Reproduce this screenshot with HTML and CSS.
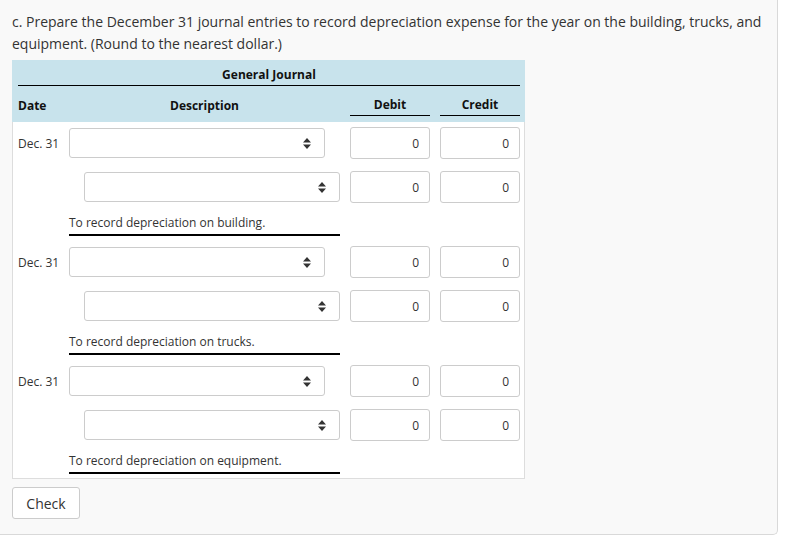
FILE: index.html
```html
<!DOCTYPE html>
<html>
<head>
<meta charset="utf-8">
<link rel="stylesheet" href="styles.css">
</head>
<body>
<div class="panel">
  <p class="prompt">c. Prepare the December 31 journal entries to record depreciation expense for the year on the building, trucks, and equipment. (Round to the nearest dollar.)</p>
  <div class="journal">
    <div class="jhead">
      <div class="jtitle">General Journal</div>
      <div class="jcols">
        <div class="h-date">Date</div>
        <div class="h-desc">Description</div>
        <div class="h-amt">Debit</div>
        <div class="h-amt">Credit</div>
      </div>
    </div>
    <div class="jbody">
      <div class="entry">
        <div class="line">
          <div class="date">Dec. 31</div>
          <div class="desc"><div class="sel"><svg class="arrows" width="8" height="11" viewBox="0 0 8 11"><path d="M4 0L8 4.5H0Z M4 11L0 6.5H8Z" fill="#333"/></svg></div></div>
          <input class="amt" value="0">
          <input class="amt" value="0">
        </div>
        <div class="line">
          <div class="date"></div>
          <div class="desc credit-side"><div class="sel"><svg class="arrows" width="8" height="11" viewBox="0 0 8 11"><path d="M4 0L8 4.5H0Z M4 11L0 6.5H8Z" fill="#333"/></svg></div></div>
          <input class="amt" value="0">
          <input class="amt" value="0">
        </div>
        <div class="memo">To record depreciation on building.</div>
      </div>
      <div class="entry">
        <div class="line">
          <div class="date">Dec. 31</div>
          <div class="desc"><div class="sel"><svg class="arrows" width="8" height="11" viewBox="0 0 8 11"><path d="M4 0L8 4.5H0Z M4 11L0 6.5H8Z" fill="#333"/></svg></div></div>
          <input class="amt" value="0">
          <input class="amt" value="0">
        </div>
        <div class="line">
          <div class="date"></div>
          <div class="desc credit-side"><div class="sel"><svg class="arrows" width="8" height="11" viewBox="0 0 8 11"><path d="M4 0L8 4.5H0Z M4 11L0 6.5H8Z" fill="#333"/></svg></div></div>
          <input class="amt" value="0">
          <input class="amt" value="0">
        </div>
        <div class="memo">To record depreciation on trucks.</div>
      </div>
      <div class="entry">
        <div class="line">
          <div class="date">Dec. 31</div>
          <div class="desc"><div class="sel"><svg class="arrows" width="8" height="11" viewBox="0 0 8 11"><path d="M4 0L8 4.5H0Z M4 11L0 6.5H8Z" fill="#333"/></svg></div></div>
          <input class="amt" value="0">
          <input class="amt" value="0">
        </div>
        <div class="line">
          <div class="date"></div>
          <div class="desc credit-side"><div class="sel"><svg class="arrows" width="8" height="11" viewBox="0 0 8 11"><path d="M4 0L8 4.5H0Z M4 11L0 6.5H8Z" fill="#333"/></svg></div></div>
          <input class="amt" value="0">
          <input class="amt" value="0">
        </div>
        <div class="memo">To record depreciation on equipment.</div>
      </div>
    </div>
  </div>
  <button class="check">Check</button>
</div>
</body>
</html>
```

FILE: styles.css
```css
html, body {
  margin: 0;
  padding: 0;
  background: #fff;
}
body {
  font-family: "Open Sans", "Liberation Sans", sans-serif;
  color: #333;
}
.panel {
  box-sizing: border-box;
  width: 778px;
  height: 535px;
  background: #f9f9f9;
  border-right: 1px solid #d9d9d9;
  border-bottom: 1px solid #d9d9d9;
  border-bottom-right-radius: 5px;
  padding: 11px 0 0 12px;
}
.prompt {
  margin: 0;
  font-size: 14px;
  line-height: 22px;
  width: 760px;
}
.journal {
  margin-top: 5px;
  width: 513px;
}
.jhead {
  background: #c8e3ec;
  height: 62px;
  box-sizing: border-box;
  padding: 0 5px 0 6px;
}
.jtitle {
  font-size: 12px;
  font-weight: 700;
  color: #111;
  text-align: center;
  height: 25px;
  line-height: 29px;
  border-bottom: 1px solid #000;
}
.jcols {
  display: grid;
  grid-template-columns: 41px 271px 80px 80px;
  column-gap: 10px;
  align-items: end;
  height: 36px;
  font-size: 12px;
  font-weight: 700;
  color: #111;
}
.h-date, .h-desc {
  line-height: 17px;
  padding-bottom: 8px;
}
.h-desc {
  text-align: center;
}
.h-amt {
  text-align: center;
  line-height: 17px;
  padding-bottom: 2px;
  margin-bottom: 6px;
  border-bottom: 1px solid #000;
}
.jbody {
  background: #fff;
  border: 1px solid #ddd;
  border-top: none;
  padding: 5px 4px 4px 5px;
}
.entry + .entry {
  margin-top: 10px;
}
.line {
  display: grid;
  grid-template-columns: 41px 271px 80px 80px;
  column-gap: 10px;
  align-items: center;
  height: 32px;
}
.line + .line {
  margin-top: 12px;
}
.date {
  font-size: 12px;
  white-space: nowrap;
}
.desc {
  display: flex;
}
.credit-side {
  justify-content: flex-end;
}
.sel {
  box-sizing: border-box;
  width: 256px;
  height: 30px;
  border: 1px solid #ccc;
  border-radius: 3px;
  background: #fff;
  display: flex;
  align-items: center;
  justify-content: flex-end;
  padding-right: 13px;
}
.amt {
  box-sizing: border-box;
  width: 80px;
  height: 32px;
  margin: 0;
  border: 1px solid #ccc;
  border-radius: 3px;
  background: #fff;
  font-family: "Open Sans", "Liberation Sans", sans-serif;
  font-size: 12px;
  color: #333;
  text-align: right;
  padding: 0 10px 0 4px;
  outline: none;
}
.memo {
  margin: 11px 0 0 51px;
  width: 271px;
  font-size: 12px;
  line-height: 17px;
  padding-bottom: 3px;
  border-bottom: 2px solid #000;
}
.check {
  display: block;
  margin-top: 8px;
  width: 68px;
  height: 32px;
  background: #fff;
  border: 1px solid #ccc;
  border-radius: 3px;
  font-family: "Open Sans", "Liberation Sans", sans-serif;
  font-size: 14px;
  color: #333;
  padding: 0;
}
```
